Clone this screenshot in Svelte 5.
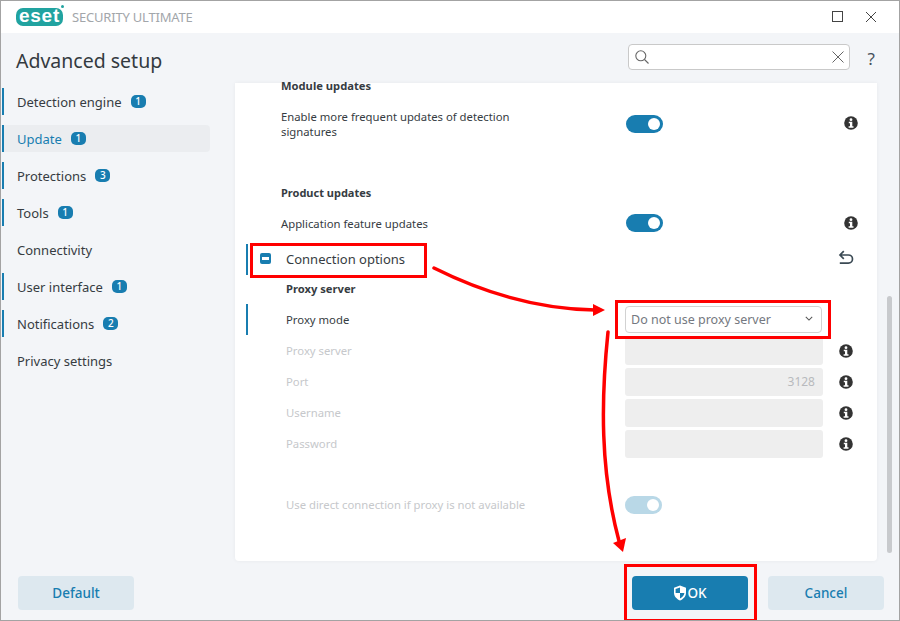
<script>
  const nav = [
    { label: "Detection engine", badge: 1, mark: true },
    { label: "Update", badge: 1, mark: true, active: true },
    { label: "Protections", badge: 3, mark: true },
    { label: "Tools", badge: 1, mark: true },
    { label: "Connectivity" },
    { label: "User interface", badge: 1, mark: true },
    { label: "Notifications", badge: 2, mark: true },
    { label: "Privacy settings" },
  ];
  const disabledFields = [
    { label: "Proxy server", value: "" },
    { label: "Port", value: "3128" },
    { label: "Username", value: "" },
    { label: "Password", value: "" },
  ];
</script>

{#snippet info()}
  <svg class="info" viewBox="0 0 14 14" width="14" height="14">
    <circle cx="7" cy="7" r="6.8" fill="#333" />
    <circle cx="7" cy="3.7" r="1.4" fill="#fff" />
    <path d="M4.8 5.8h3.5v4.4h1.2v1.5H4.6v-1.5H6V7.3H4.8z" fill="#fff" />
  </svg>
{/snippet}

<div class="window">
  <header class="titlebar">
    <div class="logo"><span class="pill">eset</span><i class="reg"></i></div>
    <span class="product">SECURITY ULTIMATE</span>
    <div class="winbtns">
      <svg viewBox="0 0 12 12" width="12" height="12"><rect x="0.5" y="0.5" width="10" height="10" fill="none" stroke="#444" /></svg>
      <svg viewBox="0 0 12 12" width="12" height="12"><path d="M1 1l10 10M11 1L1 11" stroke="#444" fill="none" /></svg>
    </div>
  </header>

  <div class="head">
    <h1>Advanced setup</h1>
    <div class="search">
      <svg viewBox="0 0 16 16" width="16" height="16"><circle cx="6.8" cy="6.8" r="5" fill="none" stroke="#666" stroke-width="1.1" /><path d="M10.5 10.5l4 4" stroke="#666" stroke-width="1.1" /></svg>
      <svg viewBox="0 0 12 12" width="12" height="12"><path d="M0.5 0.5l11 11M11.5 0.5l-11 11" stroke="#666" fill="none" /></svg>
    </div>
    <span class="help">?</span>
  </div>

  <div class="body">
    <nav class="side">
      {#each nav as item}
        <div class="navitem" class:mark={item.mark} class:active={item.active}>
          <span>{item.label}</span>
          {#if item.badge}<b class="badge">{item.badge}</b>{/if}
        </div>
      {/each}
    </nav>

    <main class="panel">
      <section class="upper">
        <h3 class="clipped">Module updates</h3>
        <div class="row first">
          <span class="wrap">Enable more frequent updates of detection signatures</span>
          <div class="ctl"><i class="toggle"></i></div>
          {@render info()}
        </div>
        <h3 class="product-head">Product updates</h3>
        <div class="row second">
          <span>Application feature updates</span>
          <div class="ctl"><i class="toggle"></i></div>
          {@render info()}
        </div>
      </section>

      <section class="conn">
        <div class="conn-head">
          <i class="collapse"></i>
          <span>Connection options</span>
          <svg class="undo" viewBox="0 0 16 16" width="16" height="16"><path d="M1.8 13.2h8.6a4.1 4.1 0 0 0 0-8.2H2.6M5.8 1.2L2 5l3.8 3.8" fill="none" stroke="#3b4a54" stroke-width="1.7" /></svg>
        </div>
        <h3>Proxy server</h3>
        <div class="frow mode">
          <span>Proxy mode</span>
          <div class="select">
            <span>Do not use proxy server</span>
            <svg viewBox="0 0 10 6" width="8" height="5"><path d="M1 1l4 4 4-4" fill="none" stroke="#555" stroke-width="1.3" /></svg>
          </div>
        </div>
        {#each disabledFields as f}
          <div class="frow off">
            <span>{f.label}</span>
            <div class="field">{f.value}</div>
            {@render info()}
          </div>
        {/each}
        <div class="frow off direct">
          <span>Use direct connection if proxy is not available</span>
          <i class="toggle dim"></i>
        </div>
      </section>
    </main>

    <div class="scroll"><i></i></div>
  </div>

  <footer class="foot">
    <button class="btn">Default</button>
    <div class="spacer"></div>
    <button class="btn primary">
      <svg viewBox="0 0 14 16" width="14" height="16"><path d="M7 0.5l6 2.2v5c0 3.6-2.6 6.2-6 7.8-3.4-1.6-6-4.2-6-7.8v-5z" fill="#fff" /><path d="M7 2.5v5.5h4.4c-.3 2.4-2.1 4.2-4.4 5.4V8H2.6V3.9z" fill="#187db0" /></svg>OK
    </button>
    <button class="btn">Cancel</button>
  </footer>

  <div class="callout c1"></div>
  <div class="callout c2"></div>
  <div class="callout c3"></div>
  <svg class="arrows" viewBox="0 0 900 621" width="900" height="621">
    <path d="M434 268C480 291 535 309 595 310" fill="none" stroke="#f00" stroke-width="3.5" stroke-linecap="round" />
    <path d="M593 304L605 310L593 316z" fill="#f00" />
    <path d="M608 332C601 400 600 470 619 541" fill="none" stroke="#f00" stroke-width="3.5" stroke-linecap="round" />
    <path d="M613 543L626 538L623 552z" fill="#f00" />
  </svg>
</div>

<style>
  :global(body) {
    margin: 0;
  }

  .window {
    position: relative;
    width: 900px;
    height: 621px;
    box-sizing: border-box;
    border: 1px solid #a3a3a3;
    background: #f3f5f8;
    font-family: "Noto Sans", sans-serif;
    font-size: 11.3px;
    color: #363c42;
    display: flex;
    flex-direction: column;
    overflow: hidden;
  }

  .titlebar {
    height: 32px;
    background: #fff;
    display: flex;
    align-items: center;
    padding-left: 15px;
    flex: none;
  }

  .logo {
    position: relative;
    width: 47px;
    height: 18px;
  }

  .pill {
    display: block;
    height: 18px;
    line-height: 15px;
    border-radius: 7px;
    background: #21a3a0;
    color: #fff;
    font-family: "Liberation Sans", sans-serif;
    font-weight: 700;
    font-size: 19px;
    letter-spacing: 0.8px;
    text-align: center;
  }

  .reg {
    position: absolute;
    right: -1px;
    top: -3px;
    width: 3px;
    height: 3px;
    border-radius: 50%;
    background: #21a3a0;
  }

  .product {
    margin-left: 9px;
    font-size: 13px;
    letter-spacing: -0.2px;
    color: #a2a6aa;
  }

  .winbtns {
    margin-left: auto;
    margin-right: 22px;
    display: flex;
    gap: 21px;
    align-items: center;
  }

  .head {
    height: 50px;
    display: flex;
    align-items: center;
    flex: none;
    padding: 0 24px 0 15px;
  }

  h1 {
    margin: 4px 0 0;
    font-size: 19.5px;
    font-weight: 400;
    color: #333a40;
    flex: 1;
  }

  .search {
    flex: none;
    width: 222px;
    height: 26px;
    box-sizing: border-box;
    border: 1px solid #c9c9c9;
    border-radius: 4px;
    background: #fff;
    display: flex;
    align-items: center;
    justify-content: space-between;
    padding: 0 5px;
    margin-top: -2px;
  }

  .help {
    margin-left: 18px;
    font-size: 17px;
    color: #47525c;
  }

  .body {
    flex: 1;
    display: flex;
    min-height: 0;
  }

  .side {
    width: 234px;
    flex: none;
    padding-top: 5px;
    display: flex;
    flex-direction: column;
    gap: 10px;
  }

  .navitem {
    width: 208px;
    height: 27px;
    margin-left: 1px;
    box-sizing: border-box;
    border-left: 2px solid transparent;
    border-radius: 0 4px 4px 0;
    padding-left: 13px;
    display: flex;
    align-items: center;
    gap: 9px;
    font-size: 13px;
  }

  .navitem.mark {
    border-left-color: #187db0;
  }

  .navitem.active {
    background: #ebedf0;
    color: #187db0;
  }

  .badge {
    min-width: 15px;
    height: 13px;
    line-height: 13px;
    border-radius: 5px;
    background: #187db0;
    color: #fff;
    font-size: 10px;
    font-weight: 500;
    text-align: center;
  }

  .panel {
    width: 642px;
    flex: none;
    height: 478px;
    background: #fff;
    border-radius: 0 0 4px 4px;
    box-shadow: 0 0 4px rgba(0, 0, 0, 0.05);
  }

  h3 {
    margin: 0;
    font-size: 11.2px;
    font-weight: 700;
    color: #363c42;
  }

  .upper {
    padding-left: 46px;
    margin-top: -1px;
  }

  .clipped {
    height: 17px;
    line-height: 7px;
  }

  .row {
    display: flex;
    align-items: center;
    padding-right: 19px;
  }

  .row .ctl {
    margin-left: auto;
    width: 218px;
  }

  .wrap {
    width: 250px;
    line-height: 15px;
  }

  .first {
    margin-top: 6px;
    height: 40px;
    align-items: flex-start;
  }

  .first .wrap {
    padding-top: 4px;
  }

  .first .ctl {
    padding-top: 10px;
  }

  .first .info {
    margin-top: 11px;
  }

  .product-head {
    margin-top: 39px;
    height: 17px;
    line-height: 17px;
    font-size: 11px;
  }

  .second {
    margin-top: 12px;
    height: 20px;
  }

  .toggle {
    display: block;
    width: 37px;
    height: 18px;
    border-radius: 9px;
    background: #187db0;
    position: relative;
  }

  .toggle::after {
    content: "";
    position: absolute;
    right: 3px;
    top: 3px;
    width: 12px;
    height: 12px;
    border-radius: 50%;
    background: #fff;
  }

  .toggle.dim {
    background: #b9d8e7;
  }

  .conn {
    margin-top: 11px;
  }

  .conn-head {
    height: 31px;
    margin-left: 11px;
    border-left: 2px solid #187db0;
    display: flex;
    align-items: center;
    padding-left: 12px;
    font-size: 13px;
  }

  .collapse {
    width: 11px;
    height: 11px;
    border-radius: 2px;
    background: #187db0;
    position: relative;
    margin-right: 15px;
    margin-top: -2px;
  }

  .collapse::after {
    content: "";
    position: absolute;
    left: 2px;
    right: 2px;
    top: 4px;
    height: 3px;
    background: #fff;
  }

  .conn-head span {
    margin-top: -1px;
  }

  .undo {
    margin-left: auto;
    margin-right: 23px;
    margin-top: -3px;
  }

  .conn h3 {
    height: 25px;
    line-height: 25px;
    margin-left: 51px;
    margin-top: 1px;
  }

  .frow {
    height: 31px;
    display: grid;
    grid-template-columns: 339px 198px 14px;
    align-items: center;
    margin-left: 11px;
    padding-left: 38px;
  }

  .frow.off {
    color: #c6c8cb;
    grid-template-columns: 339px 198px 30px;
    padding-left: 40px;
  }

  .frow.off .info {
    justify-self: end;
  }

  .mode {
    border-left: 2px solid #187db0;
    margin-top: 3px;
    grid-template-columns: 339px 197px;
  }

  .select {
    height: 27px;
    box-sizing: border-box;
    border: 1px solid #d2d2d2;
    border-radius: 4px;
    display: flex;
    align-items: center;
    justify-content: space-between;
    padding: 0 8px 0 5px;
    color: #747880;
    font-size: 12.5px;
  }

  .select svg {
    margin-top: -3px;
  }

  .field {
    height: 28px;
    line-height: 28px;
    border-radius: 3px;
    background: #eeeeee;
    text-align: right;
    padding-right: 8px;
    color: #b8babd;
    box-sizing: border-box;
    font-size: 12px;
  }

  .direct {
    margin-top: 30px;
  }

  .scroll {
    flex: none;
    width: 5px;
    margin-left: 10px;
    padding-top: 213px;
    height: 257px;
  }

  .scroll i {
    display: block;
    height: 257px;
    background: #c8cacd;
    border-radius: 3px;
  }

  .foot {
    height: 59px;
    flex: none;
    display: flex;
    align-items: center;
    padding: 4px 15px 0 17px;
    box-sizing: border-box;
  }

  .spacer {
    flex: 1;
  }

  .btn {
    width: 116px;
    height: 34px;
    border: 0;
    border-radius: 4px;
    background: #dde8ef;
    color: #187db0;
    font: 500 13.5px "Noto Sans", sans-serif;
    padding: 0;
    display: flex;
    align-items: center;
    justify-content: center;
  }

  .primary {
    background: #187db0;
    color: #fff;
    margin-right: 20px;
  }

  .callout {
    position: absolute;
    box-sizing: border-box;
    border: 3px solid #f00;
  }

  .c1 {
    left: 249px;
    top: 242px;
    width: 177px;
    height: 35px;
  }

  .c2 {
    left: 614px;
    top: 299px;
    width: 216px;
    height: 39px;
  }

  .c3 {
    left: 623px;
    top: 563px;
    width: 133px;
    height: 58px;
  }

  .arrows {
    position: absolute;
    left: -1px;
    top: -1px;
    pointer-events: none;
  }
</style>
